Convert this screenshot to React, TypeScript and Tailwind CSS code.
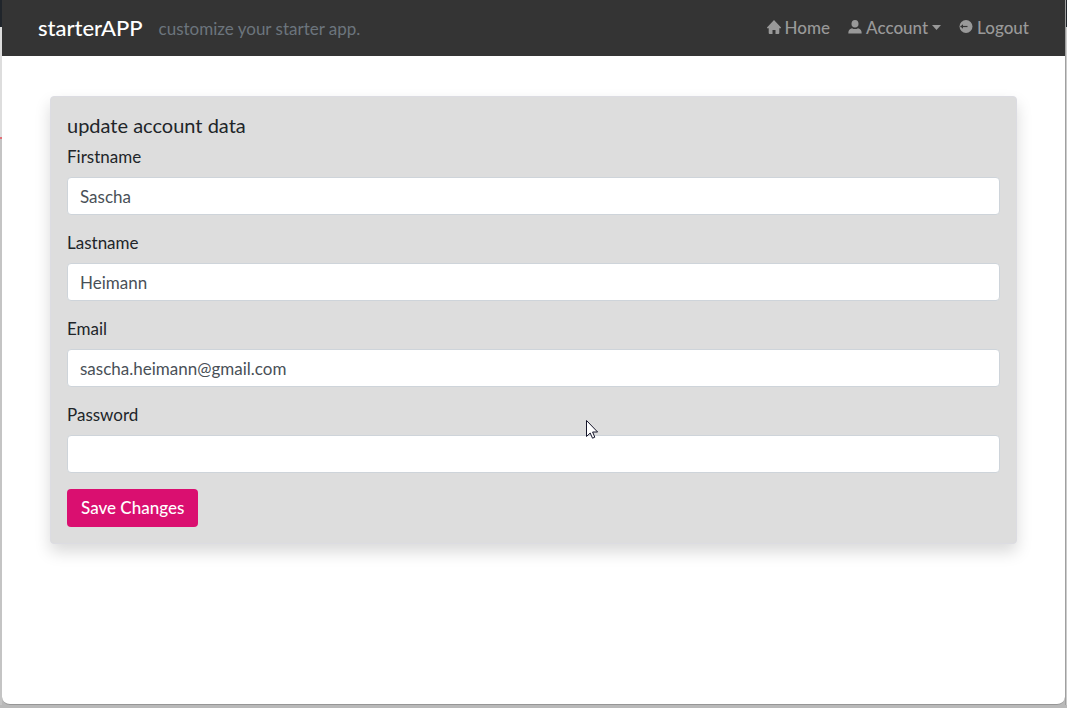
import React, { useState } from "react";

interface FieldProps {
  id: string;
  label: string;
  type?: string;
  defaultValue?: string;
}

const HomeIcon = () => (
  <svg className="mb-0.5" width="14" height="14" viewBox="0 0 14 14" fill="currentColor">
    <path d="M7 0 14 7.400c.2.400 0 .8-.4.8H12.300V13a1 1 0 0 1-1 1H8.500v-4h-3v4H2.700a1 1 0 0 1-1-1V8.200H.4C0 8.200-.2 7.800 0 7.400L7 0Z" />
  </svg>
);

const PersonIcon = () => (
  <svg className="mb-0.5" width="14" height="14" viewBox="0 0 14 14" fill="currentColor">
    <ellipse cx="7" cy="3.8" rx="3.5" ry="3.8" />
    <path d="M.3 13.500c0-3 1-4.600 3.700-5.300 1.800 1.200 4.200 1.200 6 0 2.700.7 3.700 2.300 3.700 5.300Z" />
  </svg>
);

const LogoutIcon = () => (
  <svg className="mb-0.5" width="14" height="14" viewBox="0 0 14 14">
    <circle cx="7" cy="6.500" r="6.500" fill="currentColor" />
    <path d="M8.500 6.500H1.500" stroke="#343434" strokeWidth="1.200" />
    <path d="M4 4.300 1.500 6.500 4 8.700Z" fill="#343434" />
  </svg>
);

const Field = ({ id, label, type = "text", defaultValue = "" }: FieldProps) => (
  <div className="mb-4">
    <label htmlFor={id} className="mb-2 block">
      {label}
    </label>
    <input
      id={id}
      type={type}
      defaultValue={defaultValue}
      className="block h-[38px] w-full rounded border border-[#ced4da] bg-white px-3 text-[#495057] outline-none focus:border-[#da0f70]"
    />
  </div>
);

const Navbar = () => {
  const [open, setOpen] = useState(false);

  return (
    <nav className="flex h-14 items-center bg-[#343434] px-9 text-[#999999]">
      <a href="#" className="mr-4 text-[22px] font-medium text-white">
        starterAPP
      </a>
      <span className="pt-0.5 text-[#6c757d]">customize your starter app.</span>
      <ul className="ml-auto flex items-center gap-[18px] font-medium">
        <li>
          <a href="#" className="flex items-center gap-1 hover:text-white">
            <HomeIcon />
            Home
          </a>
        </li>
        <li className="relative">
          <button
            type="button"
            aria-expanded={open}
            onClick={() => setOpen(!open)}
            className="flex items-center gap-1 hover:text-white"
          >
            <PersonIcon />
            Account
            <svg className="mb-0.5" width="9" height="5" viewBox="0 0 9 5" fill="currentColor">
              <path d="M0 0h9L4.500 5Z" />
            </svg>
          </button>
          {open && (
            <div className="absolute right-0 top-8 rounded border border-gray-300 bg-white px-6 py-2 text-[#212529]">
              <a href="#">Settings</a>
            </div>
          )}
        </li>
        <li>
          <a href="#" className="flex items-center gap-1 hover:text-white">
            <LogoutIcon />
            Logout
          </a>
        </li>
      </ul>
    </nav>
  );
};

const AccountForm = () => (
  <form
    onSubmit={(e) => e.preventDefault()}
    className="rounded border border-[#dcdce2] bg-[#dddddd] p-4 shadow-[0_8px_16px_rgba(0,0,0,0.15)]"
  >
    <h1 className="mb-2 text-xl leading-6">update account data</h1>
    <Field id="firstname" label="Firstname" defaultValue="Sascha" />
    <Field id="lastname" label="Lastname" defaultValue="Heimann" />
    <Field
      id="email"
      label="Email"
      type="email"
      defaultValue="sascha.heimann@gmail.com"
    />
    <Field id="password" label="Password" type="password" />
    <button
      type="submit"
      className="h-[38px] rounded bg-[#da0f70] px-3.5 font-medium text-white hover:bg-[#b80c5d]"
    >
      Save Changes
    </button>
  </form>
);

const App = () => (
  <div className="relative flex min-h-screen flex-col bg-[#b9b9b9] font-['Lato',sans-serif] text-[17px] leading-6 text-[#212529]">
    <div className="flex grow">
      {/* desktop visible left of the window */}
      <div className="flex w-0.5 flex-col bg-[#c4c4c4]">
        <div className="h-[27px] bg-[#20252b]" />
        <div className="h-[110px] bg-[#dddddd]" />
        <div className="h-0.5 bg-[#e07078]" />
      </div>
      <main className="grow rounded-b-lg border-b border-[#969696] bg-white">
        <Navbar />
        <div className="px-12 py-10">
          <AccountForm />
        </div>
      </main>
      <div className="flex w-0.5 flex-col border-l border-[#a0a0a0] bg-[#cccccc]">
        <div className="h-[27px] bg-[#20252b]" />
      </div>
    </div>
    <div className="h-[3px]" />

    {/* mouse pointer */}
    <svg
      className="pointer-events-none absolute left-[586px] top-[420px]"
      width="12"
      height="19"
      viewBox="0 0 12 19"
    >
      <path
        d="M.5.5v16l3.700-3.500 2.300 5.200 2.300-1-2.200-5.200h5Z"
        fill="#fff"
        stroke="#15152a"
      />
    </svg>
  </div>
);

export default App;
